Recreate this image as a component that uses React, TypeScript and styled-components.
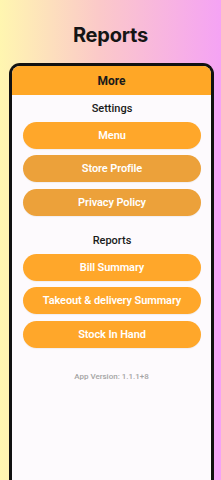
import React from 'react'
import styled, { createGlobalStyle } from 'styled-components'

const GlobalStyle = createGlobalStyle`
  html, body {
    margin: 0;
    padding: 0;
  }
  body {
    font-family: Roboto, "Liberation Sans", sans-serif;
  }
`

const Page = styled.div`
  height: 480px;
  overflow: hidden;
  background: linear-gradient(90deg, #fff6b0 0%, #fbc9c9 45%, #f5a3f4 100%);
  display: flex;
  flex-direction: column;
`

const Title = styled.h1`
  margin: 21px 0 0;
  height: 28px;
  line-height: 28px;
  text-align: center;
  font-family: Inter, "Noto Sans", sans-serif;
  font-size: 20px;
  font-weight: 700;
  letter-spacing: -0.2px;
  color: #151515;
`

const Frame = styled.div`
  margin: 14px 7px 0 9px;
  flex: 1;
  border: 3px solid #111;
  border-bottom: none;
  border-radius: 11px 11px 0 0;
  overflow: hidden;
  background: #fdfafd;
  display: flex;
  flex-direction: column;
`

const Header = styled.div`
  height: 29px;
  background: #ffa726;
  display: flex;
  align-items: center;
  justify-content: center;
  font-size: 12px;
  font-weight: 700;
  color: #1a1a1a;
`

const Section = styled.div<{ $top: number }>`
  margin-top: ${p => p.$top}px;
  display: flex;
  flex-direction: column;
  align-items: center;
  gap: 6.5px;
  padding: 0 10px 0 11px;
`

const SectionLabel = styled.div`
  height: 17px;
  line-height: 21px;
  font-size: 11px;
  font-weight: 500;
  color: #1a1a1a;
`

const Button = styled.button<{ $muted?: boolean }>`
  width: 100%;
  height: 27px;
  border: none;
  border-radius: 14px;
  background: ${p => (p.$muted ? '#eca13a' : '#ffa72a')};
  color: #fff;
  font-family: Roboto, "Liberation Sans", sans-serif;
  font-size: 11px;
  font-weight: 600;
  letter-spacing: -0.1px;
  padding: 0;
  box-shadow: 0 1px 1px rgba(0, 0, 0, 0.05);
`

const Version = styled.div`
  margin-top: 24px;
  line-height: 10px;
  text-align: center;
  font-size: 8px;
  font-weight: 500;
  color: #a4a4a4;
`

export default function App() {
  return (
    <>
      <GlobalStyle />
      <Page>
        <Title>Reports</Title>
        <Frame>
          <Header>More</Header>
          <Section $top={3}>
            <SectionLabel>Settings</SectionLabel>
            <Button>Menu</Button>
            <Button $muted>Store Profile</Button>
            <Button $muted>Privacy Policy</Button>
          </Section>
          <Section $top={14.5}>
            <SectionLabel>Reports</SectionLabel>
            <Button>Bill Summary</Button>
            <Button>Takeout &amp; delivery Summary</Button>
            <Button>Stock In Hand</Button>
          </Section>
          <Version>App Version: 1.1.1+8</Version>
        </Frame>
      </Page>
    </>
  )
}
